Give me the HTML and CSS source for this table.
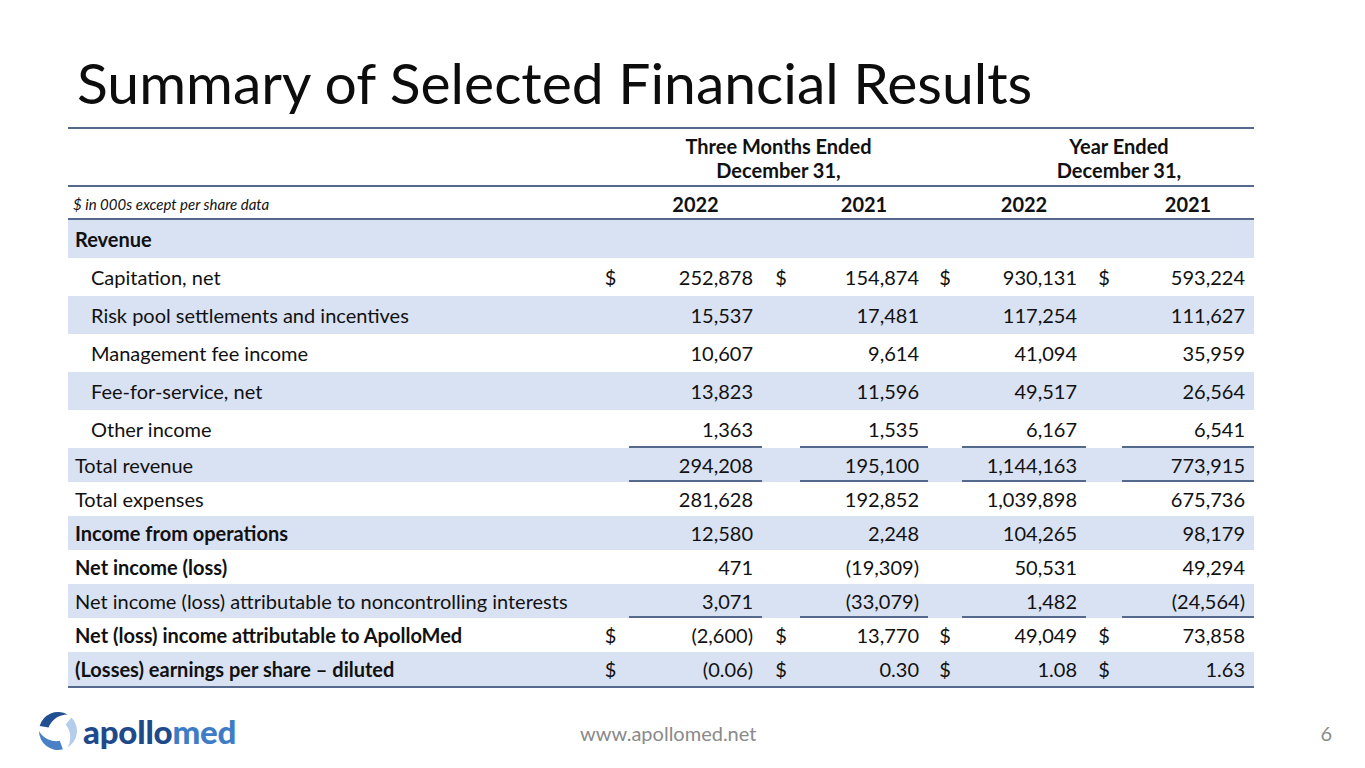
FILE: index.html
```html
<!DOCTYPE html>
<html lang="en">
<head>
<meta charset="utf-8">
<title>Summary of Selected Financial Results</title>
<link rel="stylesheet" href="styles.css">
</head>
<body>
<div class="slide">
  <h1 class="title">Summary of Selected Financial Results</h1>

  <div class="fin">
    <div class="hdr1">
      <div class="period p1">Three Months Ended<br>December 31,</div>
      <div class="period p2">Year Ended<br>December 31,</div>
    </div>
    <div class="hdr2">
      <div class="note">$ in 000s except per share data</div>
      <div class="yr y1">2022</div>
      <div class="yr y2">2021</div>
      <div class="yr y3">2022</div>
      <div class="yr y4">2021</div>
    </div>

    <div class="row band">
      <div class="lbl b">Revenue</div>
      <div></div><div></div><div></div><div></div><div></div><div></div><div></div><div></div>
    </div>
    <div class="row">
      <div class="lbl ind">Capitation, net</div>
      <div class="cur">$</div><div class="num">252,878</div>
      <div class="cur">$</div><div class="num">154,874</div>
      <div class="cur">$</div><div class="num">930,131</div>
      <div class="cur">$</div><div class="num">593,224</div>
    </div>
    <div class="row band">
      <div class="lbl ind">Risk pool settlements and incentives</div>
      <div class="cur"></div><div class="num">15,537</div>
      <div class="cur"></div><div class="num">17,481</div>
      <div class="cur"></div><div class="num">117,254</div>
      <div class="cur"></div><div class="num">111,627</div>
    </div>
    <div class="row">
      <div class="lbl ind">Management fee income</div>
      <div class="cur"></div><div class="num">10,607</div>
      <div class="cur"></div><div class="num">9,614</div>
      <div class="cur"></div><div class="num">41,094</div>
      <div class="cur"></div><div class="num">35,959</div>
    </div>
    <div class="row band">
      <div class="lbl ind">Fee-for-service, net</div>
      <div class="cur"></div><div class="num">13,823</div>
      <div class="cur"></div><div class="num">11,596</div>
      <div class="cur"></div><div class="num">49,517</div>
      <div class="cur"></div><div class="num">26,564</div>
    </div>
    <div class="row">
      <div class="lbl ind">Other income</div>
      <div class="cur"></div><div class="num ul">1,363</div>
      <div class="cur"></div><div class="num ul">1,535</div>
      <div class="cur"></div><div class="num ul">6,167</div>
      <div class="cur"></div><div class="num ul">6,541</div>
    </div>
    <div class="row sm band">
      <div class="lbl">Total revenue</div>
      <div class="cur"></div><div class="num ul">294,208</div>
      <div class="cur"></div><div class="num ul">195,100</div>
      <div class="cur"></div><div class="num ul">1,144,163</div>
      <div class="cur"></div><div class="num ul">773,915</div>
    </div>
    <div class="row sm">
      <div class="lbl">Total expenses</div>
      <div class="cur"></div><div class="num">281,628</div>
      <div class="cur"></div><div class="num">192,852</div>
      <div class="cur"></div><div class="num">1,039,898</div>
      <div class="cur"></div><div class="num">675,736</div>
    </div>
    <div class="row sm band">
      <div class="lbl b">Income from operations</div>
      <div class="cur"></div><div class="num">12,580</div>
      <div class="cur"></div><div class="num">2,248</div>
      <div class="cur"></div><div class="num">104,265</div>
      <div class="cur"></div><div class="num">98,179</div>
    </div>
    <div class="row sm">
      <div class="lbl b">Net income (loss)</div>
      <div class="cur"></div><div class="num">471</div>
      <div class="cur"></div><div class="num">(19,309)</div>
      <div class="cur"></div><div class="num">50,531</div>
      <div class="cur"></div><div class="num">49,294</div>
    </div>
    <div class="row sm band">
      <div class="lbl">Net income (loss) attributable to noncontrolling interests</div>
      <div class="cur"></div><div class="num ul">3,071</div>
      <div class="cur"></div><div class="num ul">(33,079)</div>
      <div class="cur"></div><div class="num ul">1,482</div>
      <div class="cur"></div><div class="num ul">(24,564)</div>
    </div>
    <div class="row sm">
      <div class="lbl b">Net (loss) income attributable to ApolloMed</div>
      <div class="cur">$</div><div class="num">(2,600)</div>
      <div class="cur">$</div><div class="num">13,770</div>
      <div class="cur">$</div><div class="num">49,049</div>
      <div class="cur">$</div><div class="num">73,858</div>
    </div>
    <div class="row sm band last">
      <div class="lbl b">(Losses) earnings per share – diluted</div>
      <div class="cur">$</div><div class="num">(0.06)</div>
      <div class="cur">$</div><div class="num">0.30</div>
      <div class="cur">$</div><div class="num">1.08</div>
      <div class="cur">$</div><div class="num">1.63</div>
    </div>
  </div>

  <div class="footer">
    <div class="logo">
      <svg class="logo-mark" width="40" height="40" viewBox="0 0 40 40" aria-hidden="true">
        <path fill="#1f4f91" d="M1.65 15.08 A19 19 0 0 1 29.5 3.55 A20 20 0 0 0 10.6 16.58 Z"/>
        <path fill="#b5cdeb" transform="rotate(120 20 20)" d="M1.65 15.08 A19 19 0 0 1 29.5 3.55 A20 20 0 0 0 10.6 16.58 Z"/>
        <path fill="#4a80c6" transform="rotate(240 20 20)" d="M1.65 15.08 A19 19 0 0 1 29.5 3.55 A20 20 0 0 0 10.6 16.58 Z"/>
      </svg>
      <span class="logo-text"><span class="lt-a">apollo</span><span class="lt-b">med</span></span>
    </div>
    <div class="url">www.apollomed.net</div>
    <div class="page">6</div>
  </div>
</div>
</body>
</html>
```

FILE: styles.css
```css
* { box-sizing: border-box; }
html, body { margin: 0; padding: 0; background: #ffffff; }
body {
  font-family: Lato, "Open Sans", "Liberation Sans", sans-serif;
  color: #111111;
}
.slide {
  width: 1365px;
  height: 768px;
  overflow: hidden;
}
.title {
  margin: 0;
  padding: 54px 0 0 77px;
  font-family: Lato, "Liberation Sans", sans-serif;
  font-weight: 400;
  font-size: 57px;
  line-height: 57px;
  height: 127px;
  color: #0d0d0d;
}

.fin {
  margin-left: 68px;
  width: 1186px;
  font-size: 20px;
  --cols: 524px 37px 133px 38px 128px 34px 124px 36px 132px;
  --line: #55698d;
  --band: #d9e2f3;
}
.hdr1 {
  display: grid;
  grid-template-columns: var(--cols);
  border-top: 2px solid var(--line);
  border-bottom: 2px solid var(--line);
  height: 60px;
  padding-top: 5px;
  font-weight: 700;
  line-height: 24px;
  text-align: center;
}
.period.p1 { grid-column: 3 / 6; }
.period.p2 { grid-column: 7 / 10; padding-left: 22px; }

.hdr2 {
  display: grid;
  grid-template-columns: var(--cols);
  height: 33px;
  border-bottom: 2px solid var(--line);
  padding-top: 4px;
  line-height: 27px;
  font-weight: 700;
}
.note {
  font-style: italic;
  font-weight: 400;
  font-size: 15px;
  padding-left: 5px;
}
.yr { text-align: center; }
.y1 { grid-column: 3; }
.y2 { grid-column: 5; }
.y3 { grid-column: 7; }
.y4 { grid-column: 9; }

.row {
  display: grid;
  grid-template-columns: var(--cols);
  height: 38px;
  line-height: 38px;
  white-space: nowrap;
}
.row.sm { height: 34px; line-height: 34px; }
.row.band { background: var(--band); }
.row.last { height: 36px; border-bottom: 2px solid var(--line); }
.lbl { padding-left: 7px; }
.lbl.ind { padding-left: 23px; }
.b { font-weight: 700; }
.cur { text-align: center; }
.num { text-align: right; padding-right: 9px; }
.num.ul { box-shadow: inset 0 -2px 0 var(--line); }

.footer {
  display: grid;
  grid-template-columns: 542px 1fr auto;
  align-items: center;
  height: 40px;
  margin-top: 23px;
  padding: 0 33px 0 38px;
}
.logo {
  display: flex;
  align-items: center;
  gap: 5px;
}
.logo-mark { display: block; }
.logo-text {
  font-family: Lato, "Liberation Sans", sans-serif;
  font-weight: 900;
  font-size: 33px;
  line-height: 40px;
  letter-spacing: -0.2px;
}
.lt-a { color: #1e4a8c; }
.lt-b { color: #3f7cc6; }
.url, .page {
  font-size: 20px;
  color: #8a8a8a;
  padding-top: 3px;
}
```
